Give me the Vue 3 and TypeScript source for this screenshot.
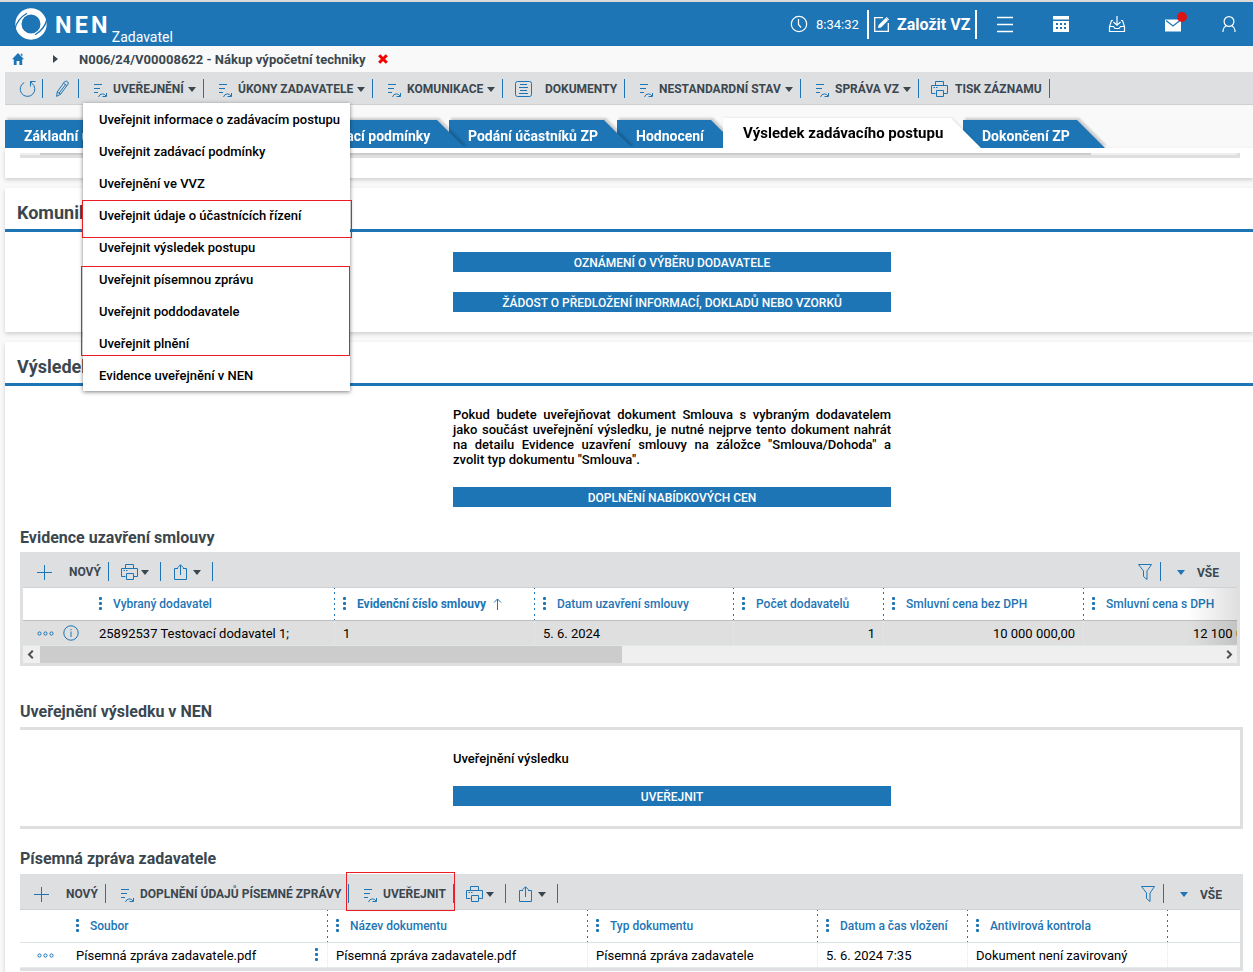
<script setup lang="ts">
import { h, type FunctionalComponent } from 'vue'

interface ToolItem {
  icon: string
  label?: string
  caret?: boolean
  width: number
  kind: string
}
interface Column {
  label: string
  width: number
  value: string
  right?: boolean
  sorted?: boolean
  more?: boolean
}

const paths: Record<string, string> = {
  reload: 'M12.8 3.2A7.3 7.3 0 1 1 5.2 2.6M11.5 6.5V1.5H16.5M11.5 1.5L13 3.2',
  pencil: 'M3.2 12L10.5 1.8Q12.4 .2 13.8 2Q14.6 3 14 4.2L6.6 14.2L2.6 16.4ZM9.6 3.2L12.8 5.6M3.2 12L6.6 14.2M11.6 4.5L5.2 13',
  flow: 'M0 .5H8M0 4.5H6M0 8.5H4M4.5 13Q5.5 9.8 8.5 9.9Q10.8 10 12 12M12.5 9V12.5H8.5',
  docs: 'M2.5 .5H14.5Q16.5 .5 16.5 2.5V13.5Q16.5 15.5 14.5 15.5H2.5Q.5 15.5 .5 13.5V2.5Q.5 .5 2.5 .5ZM5 3.5H12M4 6.5H13M5 9.5H12M4 12.5H13',
  printer: 'M4.5 4V.5H12.5V4M4.5 12.5H.5V4.5H16.5V12.5H12.5M5.5 9.5H12.5V15.5H5.5ZM2.5 6.5H4M5 6.5H6.5',
  share: 'M5 4.5H1.5V15.5H13.5V4.5H10M7.5 11V.8M4.5 3.8L7.5 .8L10.5 3.8',
  plus: 'M7.5 0V15M0 7.5H15',
  funnel: 'M.5 .5H13.5L9 7V15.5L5.5 12.5V7Z',
}
const sizes: Record<string, [number, number]> = {
  reload: [17, 17], pencil: [16, 17], flow: [14, 14], docs: [17, 16],
  printer: [17, 16], share: [17, 16], plus: [15, 15], funnel: [14, 16],
}
const Icon: FunctionalComponent<{ name: string }> = (props) => {
  const [w, ht] = sizes[props.name]
  return h('svg', { width: w, height: ht, viewBox: `0 0 ${w} ${ht}`, fill: 'none', stroke: '#1d75b5' }, [
    h('path', { d: paths[props.name] }),
  ])
}
Icon.props = ['name']

const mainTools: ToolItem[] = [
  { icon: 'reload', width: 38, kind: 'reload' },
  { icon: 'pencil', width: 36, kind: 'pencil' },
  { icon: 'flow', label: 'UVEŘEJNĚNÍ', caret: true, width: 125, kind: 'flow' },
  { icon: 'flow', label: 'ÚKONY ZADAVATELE', caret: true, width: 169, kind: 'flow' },
  { icon: 'flow', label: 'KOMUNIKACE', caret: true, width: 130, kind: 'flow' },
  { icon: 'docs', label: 'DOKUMENTY', width: 122, kind: 'docs' },
  { icon: 'flow', label: 'NESTANDARDNÍ STAV', caret: true, width: 176, kind: 'flow' },
  { icon: 'flow', label: 'SPRÁVA VZ', caret: true, width: 118, kind: 'flow' },
  { icon: 'printer', label: 'TISK ZÁZNAMU', width: 131, kind: 'print' },
]
const contractTools: ToolItem[] = [
  { icon: 'plus', label: 'NOVÝ', width: 89, kind: 'plus' },
  { icon: 'printer', caret: true, width: 52, kind: 'drop' },
  { icon: 'share', caret: true, width: 52, kind: 'drop' },
]
const reportTools: ToolItem[] = [
  { icon: 'plus', label: 'NOVÝ', width: 86, kind: 'plus tight' },
  { icon: 'flow', label: 'DOPLNĚNÍ ÚDAJŮ PÍSEMNÉ ZPRÁVY', width: 243, kind: 'flow' },
  { icon: 'flow', label: 'UVEŘEJNIT', width: 105, kind: 'flow marked' },
  { icon: 'printer', caret: true, width: 52, kind: 'drop' },
  { icon: 'share', caret: true, width: 52, kind: 'drop' },
]
const menu = [
  'Uveřejnit informace o zadávacím postupu',
  'Uveřejnit zadávací podmínky',
  'Uveřejnění ve VVZ',
  'Uveřejnit údaje o účastnících řízení',
  'Uveřejnit výsledek postupu',
  'Uveřejnit písemnou zprávu',
  'Uveřejnit poddodavatele',
  'Uveřejnit plnění',
  'Evidence uveřejnění v NEN',
]
const tabs = [
  { label: 'Základní údaje ZP', width: 307 },
  { label: 'Zadávací podmínky', width: 168 },
  { label: 'Podání účastníků ZP', width: 183 },
  { label: 'Hodnocení', width: 122 },
  { label: 'Výsledek zadávacího postupu', width: 258, active: true },
  { label: 'Dokončení ZP', width: 142 },
]
const contractCols: Column[] = [
  { label: 'Vybraný dodavatel', width: 312, value: '25892537 Testovací dodavatel 1;' },
  { label: 'Evidenční číslo smlouvy', width: 200, value: '1', sorted: true },
  { label: 'Datum uzavření smlouvy', width: 199, value: '5. 6. 2024' },
  { label: 'Počet dodavatelů', width: 150, value: '1', right: true },
  { label: 'Smluvní cena bez DPH', width: 200, value: '10 000 000,00', right: true },
  { label: 'Smluvní cena s DPH', width: 200, value: '12 100 000,00', right: true },
]
const reportCols: Column[] = [
  { label: 'Soubor', width: 308, value: 'Písemná zpráva zadavatele.pdf', more: true },
  { label: 'Název dokumentu', width: 260, value: 'Písemná zpráva zadavatele.pdf' },
  { label: 'Typ dokumentu', width: 230, value: 'Písemná zpráva zadavatele' },
  { label: 'Datum a čas vložení', width: 150, value: '5. 6. 2024 7:35' },
  { label: 'Antivirová kontrola', width: 200, value: 'Dokument není zavirovaný' },
]
const px = (n: number) => ({ width: `${n}px` })
</script>

<template>
  <div class="page">
    <header class="top">
      <svg class="logo" width="34" height="34" viewBox="0 0 34 34">
        <circle cx="17" cy="17" r="12.6" fill="none" stroke="#fff" stroke-width="6.2" />
        <path d="M1 22Q3 12 13 6.2M33 12Q31 22 21 27.8" fill="none" stroke="#1d75b5" stroke-width="1.3" />
      </svg>
      <span class="brand">NEN</span>
      <span class="role">Zadavatel</span>
      <div class="top-right">
        <svg width="18" height="18" viewBox="0 0 18 18" fill="none" stroke="#fff" stroke-width="1.2"><circle cx="9" cy="9" r="7.7" /><path d="M8.5 4V9.5L11 12.5" /></svg>
        <span class="time">8:34:32</span>
        <div class="create">
          <svg width="17" height="17" viewBox="0 0 17 17" fill="none" stroke="#fff" stroke-width="1.3"><path d="M10 1.7H1.7V15.3H15.3V7" /><path d="M5 12L5.6 9L12.6 2L15 4.4L8 11.4Z" fill="#fff" stroke="none" /><path d="M13.2 1.4L15.6 3.8" /></svg>
          <span>Založit VZ</span>
        </div>
        <svg class="slot" width="18" height="18" viewBox="0 0 18 18" stroke="#fff" stroke-width="1.4"><path d="M1 2.5H17M1 9.5H17M1 16.5H17" /></svg>
        <svg class="slot" width="18" height="18" viewBox="0 0 18 18"><path d="M1 1H17V4.4H1ZM1 6H17V17H1Z" fill="#fff" /><path d="M4 9H6M8 9H10M12 9H14M4 13H6M8 13H10M12 13H14" stroke="#1d75b5" stroke-width="1.8" /></svg>
        <svg class="slot" width="18" height="18" viewBox="0 0 18 18" fill="none" stroke="#fff" stroke-width="1.2"><path d="M5 5.5H3.5L1.5 11.5V16.5H16.5V11.5L14.5 5.5H13M1.5 11.5H5.5L7 13.5H11L12.5 11.5H16.5M9 1V10M5.5 7L9 10.3L12.5 7" /></svg>
        <span class="slot mail">
          <svg width="18" height="18" viewBox="0 0 18 18"><path d="M1 4.5H17V16.5H1Z" fill="#fff" /><path d="M2 5.5L9 11L16 5.5" fill="none" stroke="#1d75b5" stroke-width="1.2" /></svg>
          <i class="badge"></i>
        </span>
        <svg class="slot" width="18" height="18" viewBox="0 0 18 18" fill="none" stroke="#fff" stroke-width="1.2"><circle cx="9" cy="6.5" r="4.9" /><path d="M3 17V15.3Q3.2 12.5 6.2 10.8M15 17V15.3Q14.8 12.5 11.8 10.8" /></svg>
      </div>
    </header>

    <nav class="crumbs">
      <svg width="12" height="12" viewBox="0 0 12 12"><path d="M6 0L12 6.3H10.2V12H7.4V8H4.6V12H1.8V6.3H0L6 0ZM8.8 .8H10.4V3.6L8.8 2Z" fill="#1d75b5" /></svg>
      <i class="chev"></i>
      <span>N006/24/V00008622 - Nákup výpočetní techniky</span>
      <svg width="10" height="10" viewBox="0 0 10 10"><path d="M1.2 1.2L8.8 8.8M8.8 1.2L1.2 8.8" stroke="#f50000" stroke-width="3" /></svg>
    </nav>

    <div class="toolbar main-bar">
      <div v-for="(t, i) in mainTools" :key="i" class="tool" :class="t.kind" :style="px(t.width)">
        <Icon :name="t.icon" /><span v-if="t.label">{{ t.label }}</span><i v-if="t.caret" class="caret"></i>
      </div>
      <div class="menu">
        <div v-for="m in menu" :key="m" class="menu-item">{{ m }}</div>
        <div class="mark mark-a"></div>
        <div class="mark mark-b"></div>
      </div>
    </div>

    <div class="tabs">
      <div v-for="t in tabs" :key="t.label" class="tab" :class="{ active: t.active }" :style="px(t.width)">
        <div class="tab-face">{{ t.label }}</div>
      </div>
    </div>

    <section class="card stub"><div class="rest"><div class="rest-thumb"></div></div></section>

    <section class="card comm">
      <h2>Komunikace</h2>
      <button class="btn">OZNÁMENÍ O VÝBĚRU DODAVATELE</button>
      <button class="btn">ŽÁDOST O PŘEDLOŽENÍ INFORMACÍ, DOKLADŮ NEBO VZORKŮ</button>
    </section>

    <section class="card result">
      <h2>Výsledek</h2>
      <p class="note">Pokud budete uveřejňovat dokument Smlouva s vybraným dodavatelem jako součást uveřejnění výsledku, je nutné nejprve tento dokument nahrát na detailu Evidence uzavření smlouvy na záložce "Smlouva/Dohoda" a zvolit typ dokumentu "Smlouva".</p>
      <button class="btn">DOPLNĚNÍ NABÍDKOVÝCH CEN</button>

      <h3 class="h-contract">Evidence uzavření smlouvy</h3>
      <div class="grid contract">
        <div class="toolbar">
          <div v-for="(t, i) in contractTools" :key="i" class="tool" :class="t.kind" :style="px(t.width)">
            <Icon :name="t.icon" /><span v-if="t.label">{{ t.label }}</span><i v-if="t.caret" class="caret"></i>
          </div>
          <div class="view"><div class="tool filter"><Icon name="funnel" /></div><i class="caret blue"></i><span>VŠE</span></div>
        </div>
        <div class="cells">
          <div class="row head">
            <div v-for="c in contractCols" :key="c.label" class="cell" :style="px(c.width)">
              <i class="dots"></i><span :class="{ sorted: c.sorted }">{{ c.label }}</span>
              <svg v-if="c.sorted" class="sort" width="9" height="12" viewBox="0 0 9 12" fill="none" stroke="#1d75b5"><path d="M4.5 12V1M1 4.5L4.5 1L8 4.5" /></svg>
            </div>
          </div>
          <div class="row body">
            <div v-for="(c, i) in contractCols" :key="c.label" class="cell" :class="{ right: c.right }" :style="px(c.width)">
              <span v-if="i === 0" class="lead">
                <svg width="17" height="5" viewBox="0 0 17 5" fill="none" stroke="#1d75b5"><circle cx="2.5" cy="2.5" r="1.6" /><circle cx="8.5" cy="2.5" r="1.6" /><circle cx="14.5" cy="2.5" r="1.6" /></svg>
                <svg width="16" height="16" viewBox="0 0 16 16" fill="none" stroke="#1d75b5"><circle cx="8" cy="8" r="7.2" /><path d="M8 6.5V12M8 4V5.2" /></svg>
              </span>
              <span>{{ c.value }}</span>
            </div>
          </div>
          <div class="fade"></div>
        </div>
        <div class="scroll">
          <div class="arrow"><svg width="7" height="9" viewBox="0 0 7 9" fill="none" stroke="#505050" stroke-width="2"><path d="M5.8 .8L2 4.5L5.8 8.2" /></svg></div>
          <div class="thumb"></div>
          <div class="arrow end"><svg width="7" height="9" viewBox="0 0 7 9" fill="none" stroke="#505050" stroke-width="2"><path d="M1.2 .8L5 4.5L1.2 8.2" /></svg></div>
        </div>
      </div>

      <h3 class="h-publish">Uveřejnění výsledku v NEN</h3>
      <div class="publish">
        <div class="publish-label">Uveřejnění výsledku</div>
        <button class="btn">UVEŘEJNIT</button>
      </div>

      <h3 class="h-report">Písemná zpráva zadavatele</h3>
      <div class="grid report">
        <div class="toolbar">
          <div v-for="(t, i) in reportTools" :key="i" class="tool" :class="t.kind" :style="px(t.width)">
            <Icon :name="t.icon" /><span v-if="t.label">{{ t.label }}</span><i v-if="t.caret" class="caret"></i>
          </div>
          <div class="view"><div class="tool filter"><Icon name="funnel" /></div><i class="caret blue"></i><span>VŠE</span></div>
        </div>
        <div class="cells">
          <div class="row head">
            <div v-for="c in reportCols" :key="c.label" class="cell" :style="px(c.width)"><i class="dots"></i><span>{{ c.label }}</span></div>
          </div>
          <div class="row body">
            <div v-for="(c, i) in reportCols" :key="c.label" class="cell" :style="px(c.width)">
              <span v-if="i === 0" class="lead">
                <svg width="17" height="5" viewBox="0 0 17 5" fill="none" stroke="#1d75b5"><circle cx="2.5" cy="2.5" r="1.6" /><circle cx="8.5" cy="2.5" r="1.6" /><circle cx="14.5" cy="2.5" r="1.6" /></svg>
              </span>
              <span>{{ c.value }}</span><i v-if="c.more" class="dots"></i>
            </div>
          </div>
        </div>
      </div>
    </section>
  </div>
</template>

<style>
body { margin: 0; overflow: hidden; }
</style>

<style scoped>
*, *::after { box-sizing: border-box; }
.page { width: 1253px; height: 972px; overflow: hidden; background: #f9f9f9; font: 400 13px/15px Roboto, "Liberation Sans", sans-serif; color: #000; white-space: nowrap; }
svg { display: block; flex: none; }
i { display: block; flex: none; }

.top { height: 46px; border-top: 2px solid #dadada; background: #1d75b5; color: #fff; display: flex; align-items: center; padding-left: 14px; }
.brand { font-size: 23.4px; font-weight: 700; letter-spacing: 3.2px; line-height: 30px; margin-left: 7px; margin-top: 2px; }
.role { font-size: 14px; line-height: 16px; margin: 26px 0 0 1px; }
.top-right { margin-left: auto; display: flex; align-items: center; padding-right: 15px; }
.time { width: 51px; margin-left: 8px; }
.create { height: 29px; margin-top: 1px; width: 110px; border: solid #fff; border-width: 0 2px; display: flex; align-items: center; padding-left: 4px; font-size: 16px; font-weight: 700; }
.create span { margin-left: 7px; }
.slot { width: 18px; height: 18px; margin-left: 38px; }
.create + .slot { margin-left: 19px; }
.mail { position: relative; }
.badge { position: absolute; left: 13px; top: -3px; width: 10px; height: 10px; border-radius: 50%; background: #dc1414; }

.crumbs { height: 26px; display: flex; align-items: center; padding-left: 12px; font-weight: 700; color: #3b474f; }
.chev { border: solid transparent; border-width: 4px 0 4px 5px; border-left-color: #3b474f; margin: 0 21px 0 29px; }
.crumbs span { margin-right: 13px; }

.toolbar { display: flex; background: #dedfe1; color: #3b474f; font-size: 12px; font-weight: 700; }
.toolbar span { padding-top: 2px; }
.main-bar { position: relative; margin-left: 5px; height: 33px; border-bottom: 1px solid #cfcfcf; padding-top: 7px; }
.tool { height: 19px; border-right: 1px solid #1d75b5; display: flex; align-items: center; flex: none; }
.tool.reload { padding-left: 14px; }
.tool.pencil { padding-left: 11px; }
.tool.flow { padding-left: 15px; }
.tool.flow svg { margin: 5px 5px 0 0; }
.tool.docs { padding-left: 12px; }
.tool.docs svg { margin-right: 13px; }
.tool.print { padding-left: 12px; }
.tool.print svg { margin-right: 7px; }
.tool.drop { padding-left: 12px; }
.tool.drop .caret { margin-left: 3px; }
.tool.plus { padding-left: 17px; }
.tool.plus svg { margin: 1px 17px 0 0; }
.tool.tight { padding-left: 14px; }
.tool.marked { position: relative; z-index: 2; }
.tool.marked::after { content: ""; position: absolute; left: -3px; top: -12px; width: 109px; height: 39px; border: 1px solid #ed1c24; }
.caret { border: solid transparent; border-width: 5px 4px 0; border-top-color: #3b474f; margin: 1px 0 0 4px; }
.caret.blue { border-top-color: #1d75b5; margin: 1px 12px 0 16px; }

.menu { position: absolute; z-index: 10; left: 78px; top: 31px; width: 267px; height: 288px; background: #fff; box-shadow: 0 1px 4px rgba(0, 0, 0, .5); color: #000; font-size: 13px; font-weight: 500; }
.menu-item { height: 32px; line-height: 33px; padding-left: 16px; }
.mark { position: absolute; border: 1px solid #ed1c24; }
.mark-a { left: -1px; top: 97px; width: 270px; height: 38px; }
.mark-b { left: -2px; top: 163px; width: 269px; height: 90px; }

.tabs { height: 43px; padding: 13px 0 0 5px; display: flex; overflow: hidden; }
.tab { height: 30px; padding-top: 2px; flex: none; margin-right: -15px; filter: drop-shadow(2px -2px 1px rgba(0, 0, 0, .18)); position: relative; z-index: 5; font-size: 14px; font-weight: 700; color: #fff; }
.tab:nth-child(2) { margin-right: -16px; z-index: 4; }
.tab:nth-child(3) { z-index: 3; }
.tab:nth-child(4) { z-index: 2; margin-right: -16px; }
.tab:nth-child(6) { z-index: 1; }
.tab-face { height: 28px; background: #1d75b5; clip-path: polygon(0 0, calc(100% - 28px) 0, 100% 100%, 0 100%); line-height: 32px; padding-left: 19px; }
.tab:nth-child(2) .tab-face { padding-left: 11px; }
.tab.active { z-index: 6; padding: 0; color: #000; font-size: 15px; margin-right: -18px; filter: drop-shadow(1px 0 1px rgba(0, 0, 0, .12)); }
.tab.active .tab-face { height: 30px; background: #fff; padding-left: 20px; line-height: 30px; clip-path: polygon(0 0, calc(100% - 30px) 0, 100% 100%, 0 100%); }

.card { margin-left: 5px; background: #fff; box-shadow: 0 2px 4px rgba(0, 0, 0, .17); }
.stub { height: 30px; padding: 5px 13px 0 15px; }
.rest { height: 5px; background: #efefef; border-bottom: 3px solid #dfdfdf; border-right: 3px solid #dfdfdf; padding-left: 20px; }
.rest-thumb { width: 1051px; height: 2px; background: #ccc; }
.comm { height: 144px; margin-top: 10px; }
.result { height: 640px; margin-top: 10px; }
h2 { margin: 0; height: 44px; padding-left: 12px; font-size: 18px; font-weight: 700; line-height: 49px; color: #3b474f; border-bottom: 3px solid #1d75b5; }
.btn { display: block; width: 438px; height: 20px; margin: 20px 0 0 448px; padding: 2px 0 0; border: 0; background: #1d75b5; color: #fff; font: 500 12px/18px Roboto, "Liberation Sans", sans-serif; text-align: center; }
.note { width: 438px; margin: 21px 0 0 448px; white-space: normal; text-align: justify; font-weight: 500; }
h3 { margin: 0 0 0 15px; font-size: 16px; line-height: 18px; font-weight: 700; color: #3b474f; }
.h-contract { margin-top: 22px; }

.grid .toolbar { height: 35px; padding-top: 10px; }
.grid .cells { overflow: hidden; position: relative; }
.view { margin-left: auto; display: flex; height: 19px; align-items: center; padding-right: 21px; }
.view span { padding-top: 3px; }
.tool.filter { padding-right: 8px; }
.row { display: flex; }
.cell { flex: none; display: flex; align-items: center; padding-left: 8px; height: 100%; }
.head { height: 32px; color: #1d75b5; font-size: 12px; font-weight: 500; }
.head .cell { border-right: 1px solid transparent; border-image: repeating-linear-gradient(180deg, #1d75b5 0 2px, transparent 2px 5px) 1; }
.sorted { font-weight: 700; }
.sort { margin-left: 7px; }
.dots { width: 3px; height: 3px; background: #1d75b5; border-radius: 1px; box-shadow: 0 -5px #1d75b5, 0 5px #1d75b5; }
.head .dots { margin: -1px 11px 0 0; }
.body .cell { position: relative; border-right: 1px dotted #e8e8e8; }
.body .dots { position: absolute; right: 9px; top: 10px; }
.body .right { justify-content: flex-end; padding-right: 8px; }
.lead { position: absolute; display: flex; align-items: center; gap: 9px; left: 14px; top: 0; height: 24px; }

.contract { margin: 5px 0 0 15px; width: 1220px; height: 114px; background: #dedfe1; }
.contract .cells { margin: 0 3px; border-top: 1px solid #cfd0d1; }
.contract .head { background: #fff; }
.contract .cell:first-child { padding-left: 76px; }
.contract .body { height: 25px; border-top: 1px solid #bfbfbf; background: #dfdfdf; }
.fade { position: absolute; right: 0; top: 0; width: 50px; height: 57px; background: linear-gradient(90deg, rgba(0, 0, 0, 0), rgba(0, 0, 0, .12)); }
.scroll { margin: 0 3px; height: 18px; border-top: 1px solid #dfe8e8; background: #efefef; display: flex; align-items: center; }
.arrow { width: 17px; padding-left: 4px; }
.arrow.end { margin-left: auto; padding-left: 6px; }
.thumb { width: 582px; height: 17px; background: #ccc; }

.h-publish { margin-top: 37px; }
.publish { margin: 6px 0 0 15px; width: 1223px; height: 102px; border: 3px solid #dedfe1; border-left: 0; }
.publish-label { margin: 21px 0 0 433px; font-weight: 500; }
.publish .btn { margin-left: 433px; }
.h-report { margin-top: 21px; }
.report { margin: 6px 0 0 15px; width: 1223px; height: 97px; background: #dedfe1; }
.report .cells { margin-right: 3px; border-top: 1px solid #cfd0d1; background: #fff; }
.report .cell:first-child { padding-left: 56px; }
.report .body { height: 26px; border-top: 1px solid #dde4e8; border-bottom: 1px solid #e6ebee; }
.report .lead { left: 17px; }
</style>
